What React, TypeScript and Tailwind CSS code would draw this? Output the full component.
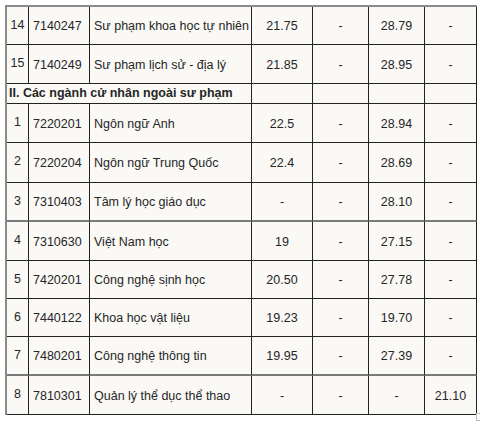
import React from "react";

interface Row {
    stt: string,
    code: string,
    name: string,
    a: string,
    b: string,
    c: string,
    d: string,
    h: string,
    thick?: boolean,
}

const top: Row[] = [
    {stt: "14", code: "7140247", name: "Sư phạm khoa học tự nhiên", a: "21.75", b: "-", c: "28.79", d: "-", h: "h-[38px]"},
    {stt: "15", code: "7140249", name: "Sư phạm lịch sử - địa lý", a: "21.85", b: "-", c: "28.95", d: "-", h: "h-[39px]"},
];

const rows: Row[] = [
    {stt: "1", code: "7220201", name: "Ngôn ngữ Anh", a: "22.5", b: "-", c: "28.94", d: "-", h: "h-[39px]"},
    {stt: "2", code: "7220204", name: "Ngôn ngữ Trung Quốc", a: "22.4", b: "-", c: "28.69", d: "-", h: "h-[40px]"},
    {stt: "3", code: "7310403", name: "Tâm lý học giáo dục", a: "-", b: "-", c: "28.10", d: "-", h: "h-[39px]", thick: true},
    {stt: "4", code: "7310630", name: "Việt Nam học", a: "19", b: "-", c: "27.15", d: "-", h: "h-[39px]"},
    {stt: "5", code: "7420201", name: "Công nghệ sịnh học", a: "20.50", b: "-", c: "27.78", d: "-", h: "h-[38px]"},
    {stt: "6", code: "7440122", name: "Khoa học vật liệu", a: "19.23", b: "-", c: "19.70", d: "-", h: "h-[38px]"},
    {stt: "7", code: "7480201", name: "Công nghệ thông tin", a: "19.95", b: "-", c: "27.39", d: "-", h: "h-[39px]", thick: true},
    {stt: "8", code: "7810301", name: "Quản lý thể dục thể thao", a: "-", b: "-", c: "-", d: "21.10", h: "h-[39px]"},
];

const DataRow: React.FC<{row: Row}> = ({row}) => {
    const bottom = row.thick ? "border-b-2 border-b-[#7a7a7a]" : "border-b border-b-[#222]";
    const cell = `flex items-center border-r border-r-[#222] ${bottom}`;
    return (
        <div className={`flex ${row.h}`}>
            <div className={`${cell} w-[22px] justify-center !items-start pt-[9px]`}>{row.stt}</div>
            <div className={`${cell} w-[61px] pl-[4px] pt-[2px]`}>{row.code}</div>
            <div className={`${cell} w-[162px] pl-[4px] pt-[2px] whitespace-nowrap`}>{row.name}</div>
            <div className={`${cell} w-[61px] justify-center pt-[2px]`}>{row.a}</div>
            <div className={`${cell} w-[56px] justify-center pt-[2px]`}>{row.b}</div>
            <div className={`${cell} w-[56px] justify-center pt-[2px]`}>{row.c}</div>
            <div className={`${cell} w-[52px] justify-center pt-[2px]`}>{row.d}</div>
        </div>
    );
}

export default function App() {
    return (
        <div className="relative w-[480px] h-[421px] bg-white pt-[5px] pl-[5px] overflow-hidden"
             style={{fontFamily: "'Liberation Sans', Arial, sans-serif"}}>
            <div className="w-[472px] border-l-2 border-t-2 border-[#8a8a8a] bg-[#faf9f6] text-[12.5px] text-[#262626]">
                {top.map((r) => <DataRow key={r.code} row={r}/>)}
                <div className="flex h-[20px]">
                    <div className="w-[245px] border-r border-b border-[#222] flex items-center pl-[2px] font-bold whitespace-nowrap">
                        II. Các ngành cử nhân ngoài sư phạm
                    </div>
                    <div className="w-[61px] border-r border-b border-[#222]"></div>
                    <div className="w-[56px] border-r border-b border-[#222]"></div>
                    <div className="w-[56px] border-r border-b border-[#222]"></div>
                    <div className="w-[52px] border-r border-b border-[#222]"></div>
                </div>
                {rows.map((r) => <DataRow key={r.code} row={r}/>)}
            </div>
            <div className="absolute left-[476px] top-[413px] w-[8px] h-[8px] border border-[#bbb] bg-white"></div>
        </div>
    );
}
